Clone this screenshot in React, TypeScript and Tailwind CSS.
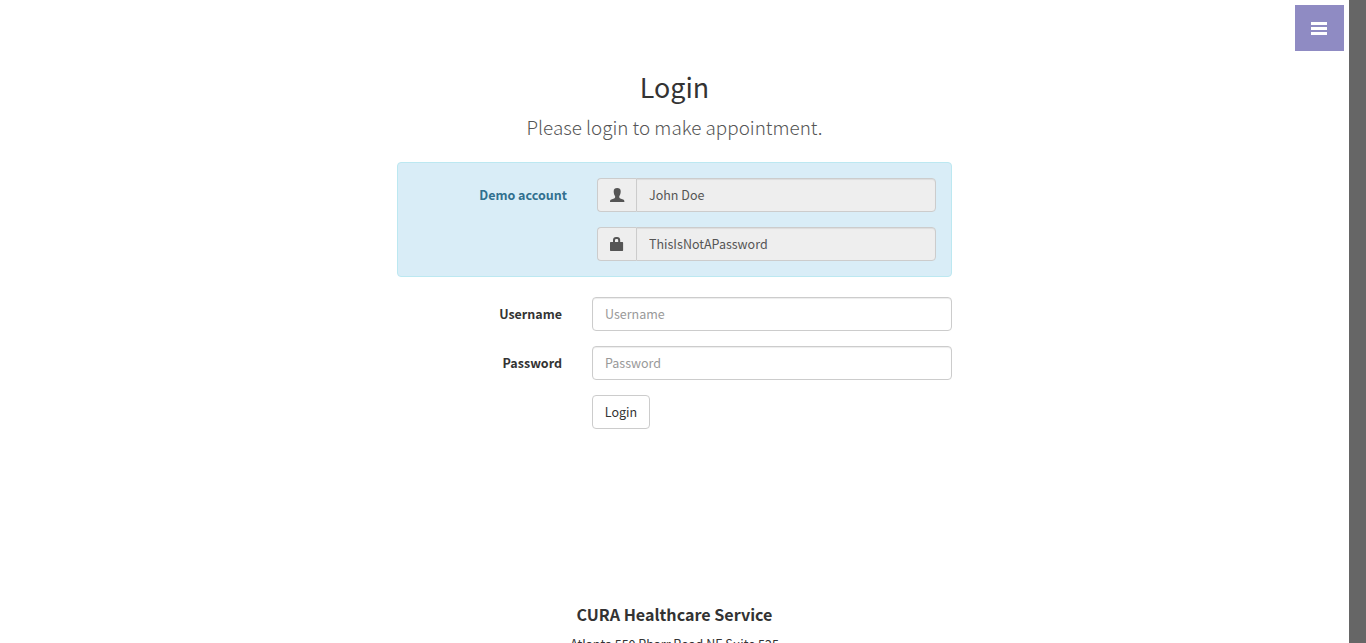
import type { ReactNode } from "react";

function UserIcon() {
  return (
    <svg width="15" height="14" viewBox="0 0 15 14" fill="currentColor">
      <path d="M7.2 0C5 0 3.7 1.2 3.7 3.2C3.7 5.4 4.2 7 5.1 8V9.3C5.1 9.8 4.7 10.1 4.1 10.4L1.3 11.5C.4 11.9 0 12.4 0 14H14.4C14.4 12.4 14 11.9 13.1 11.5L10.3 10.4C9.7 10.1 9.3 9.8 9.3 9.3V8C10.2 7 10.7 5.4 10.7 3.2C10.7 1.2 9.4 0 7.2 0Z" />
    </svg>
  );
}

function LockIcon() {
  return (
    <svg width="14" height="14" viewBox="0 0 14 14" fill="currentColor">
      <path
        fillRule="evenodd"
        d="M3 5V3C3 1.2 4.2 0 6 0H7.2C9 0 10.2 1.2 10.2 3V5H12.5Q13.1 5 13.1 5.7V13.3Q13.1 14 12.5 14H.6Q0 14 0 13.3V5.7Q0 5 .6 5ZM5 5H8.2V3.2Q8.2 2 7.1 2H6.1Q5 2 5 3.2Z"
      />
    </svg>
  );
}

const inputClass =
  "h-[34px] w-full min-w-0 border border-[#ccc] px-3 pb-[2px] text-[12.5px] leading-5 text-[#555] shadow-[inset_0_1px_1px_rgba(0,0,0,0.075)] outline-none placeholder:text-[#999]";

function DemoField({ icon, value }: { icon: ReactNode; value: string }) {
  return (
    <div className="flex h-[34px] w-[339px]">
      <span className="flex w-[39px] shrink-0 items-center rounded-l border border-r-0 border-[#ccc] bg-[#eee] pl-3 text-[#555]">
        {icon}
      </span>
      <input readOnly value={value} className={`${inputClass} rounded-r bg-[#eee]`} />
    </div>
  );
}

export default function App() {
  return (
    <div className="flex h-[643px] overflow-hidden bg-white font-['Noto_Sans_CJK_SC',sans-serif] text-[12.5px] leading-5 text-[#333]">
      <div className="relative flex min-w-0 flex-1 flex-col items-center">
        <button className="absolute top-[5px] right-[5px] flex h-[46px] w-[49px] items-center justify-center bg-[#8f8bc3] pr-px">
          <svg width="16" height="13" viewBox="0 0 16 13" fill="#fff">
            <path d="M0 0h16v3H0zM0 5h16v3H0zM0 10h16v3H0z" />
          </svg>
        </button>
        <h2 className="mt-[70px] text-[26.85px] leading-[33px]">Login</h2>
        <p className="mt-[9px] text-[18.85px] leading-[29px] font-light text-[#555]">Please login to make appointment.</p>
        <form className="mt-[21px] w-[555px]" onSubmit={(e) => e.preventDefault()}>
          <div className="flex h-[115px] rounded border border-[#bce8f1] bg-[#d9edf7] py-[15px] pr-[15px]">
            <label className="w-[169px] pt-[7px] text-right font-bold text-[#31708f]">Demo account</label>
            <div className="ml-[30px] flex flex-col gap-[15px]">
              <DemoField icon={<UserIcon />} value="John Doe" />
              <DemoField icon={<LockIcon />} value="ThisIsNotAPassword" />
            </div>
          </div>
          <div className="mt-5 grid grid-cols-[165px_360px] gap-x-[30px] gap-y-[15px]">
            <label htmlFor="username" className="pt-[7px] text-right font-bold">Username</label>
            <input id="username" placeholder="Username" className={`${inputClass} rounded`} />
            <label htmlFor="password" className="pt-[7px] text-right font-bold">Password</label>
            <input id="password" type="password" placeholder="Password" className={`${inputClass} rounded`} />
            <button className="col-start-2 h-[34px] w-[58px] rounded border border-[#ccc] bg-white text-center">Login</button>
          </div>
        </form>
        <footer className="mt-[175px] text-center">
          <h4 className="text-[16.1px] leading-5 font-bold">CURA Healthcare Service</h4>
          <p className="mt-[10px]">Atlanta 550 Pharr Road NE Suite 525</p>
        </footer>
      </div>
      <div className="w-[17px] shrink-0 bg-[#666]" />
    </div>
  );
}
